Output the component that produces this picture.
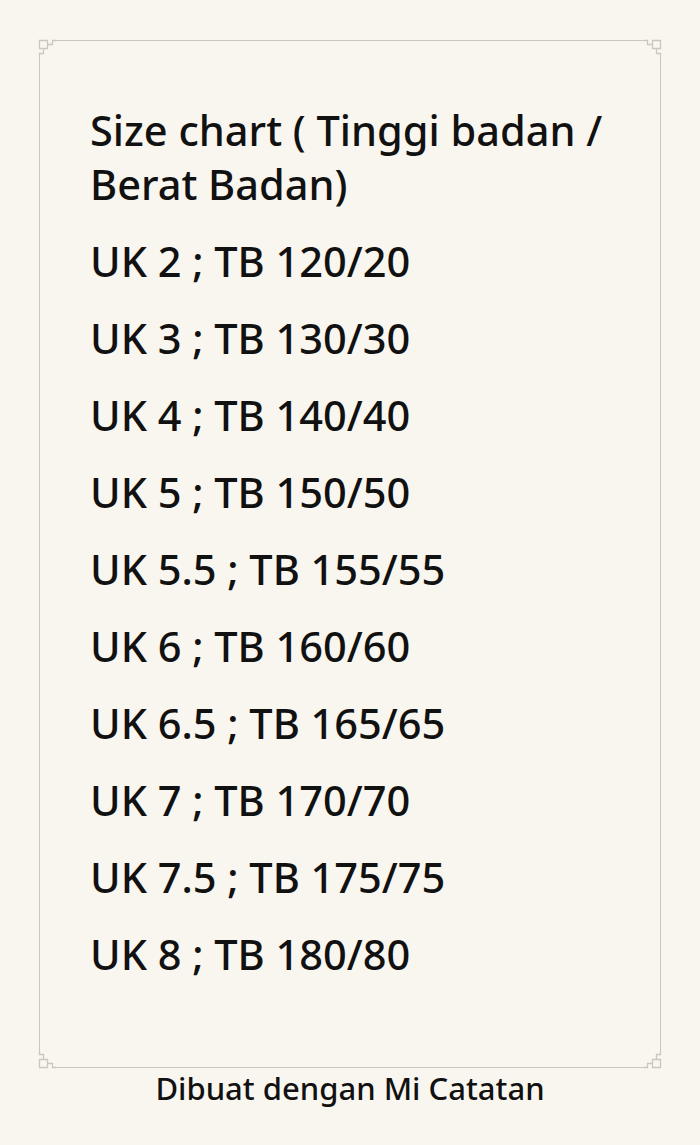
const rows = [
  'UK 2 ; TB 120/20',
  'UK 3 ; TB 130/30',
  'UK 4 ; TB 140/40',
  'UK 5 ; TB 150/50',
  'UK 5.5 ; TB 155/55',
  'UK 6 ; TB 160/60',
  'UK 6.5 ; TB 165/65',
  'UK 7 ; TB 170/70',
  'UK 7.5 ; TB 175/75',
  'UK 8 ; TB 180/80',
]

// corner fret drawn for top-left; others are flipped copies
function Corner({ className }: { className: string }) {
  return (
    <svg width="18" height="18" viewBox="0 0 18 18" className={`absolute ${className}`}>
      <rect x="0" y="0" width="18" height="18" fill="#f9f6ef" />
      <path
        d="M1.5 1.5 H9.5 V9.5 H1.5 Z M9.5 5.5 H14.5 V1.5 H18 M5.5 9.5 V14.5 H1.5 V18"
        fill="none"
        stroke="#cbc7bf"
        strokeWidth="1.3"
      />
    </svg>
  )
}

export default function App() {
  return (
    <div
      className="w-[700px] h-[1145px] bg-[#f9f6ef] pt-[40px] px-[39px] text-[#111111]"
      style={{ fontFamily: '"Noto Sans", Inter, sans-serif' }}
    >
      <div className="relative h-[1028px] border border-[#cbc7bf] px-[50px] pt-[62px]">
        <Corner className="-left-[2px] -top-[2px]" />
        <Corner className="-right-[2px] -top-[2px] -scale-x-100" />
        <Corner className="-left-[2px] -bottom-[2px] -scale-y-100" />
        <Corner className="-right-[2px] -bottom-[2px] -scale-100" />

        <p className="text-[41.5px] leading-[54px] font-medium">Size chart ( Tinggi badan / Berat Badan)</p>
        {rows.map((r) => (
          <p key={r} className="mt-[23px] text-[41.5px] leading-[54px] font-medium">
            {r}
          </p>
        ))}
      </div>
      <p className="text-center text-[31px] leading-[40px] font-medium">Dibuat dengan Mi Catatan</p>
    </div>
  )
}
